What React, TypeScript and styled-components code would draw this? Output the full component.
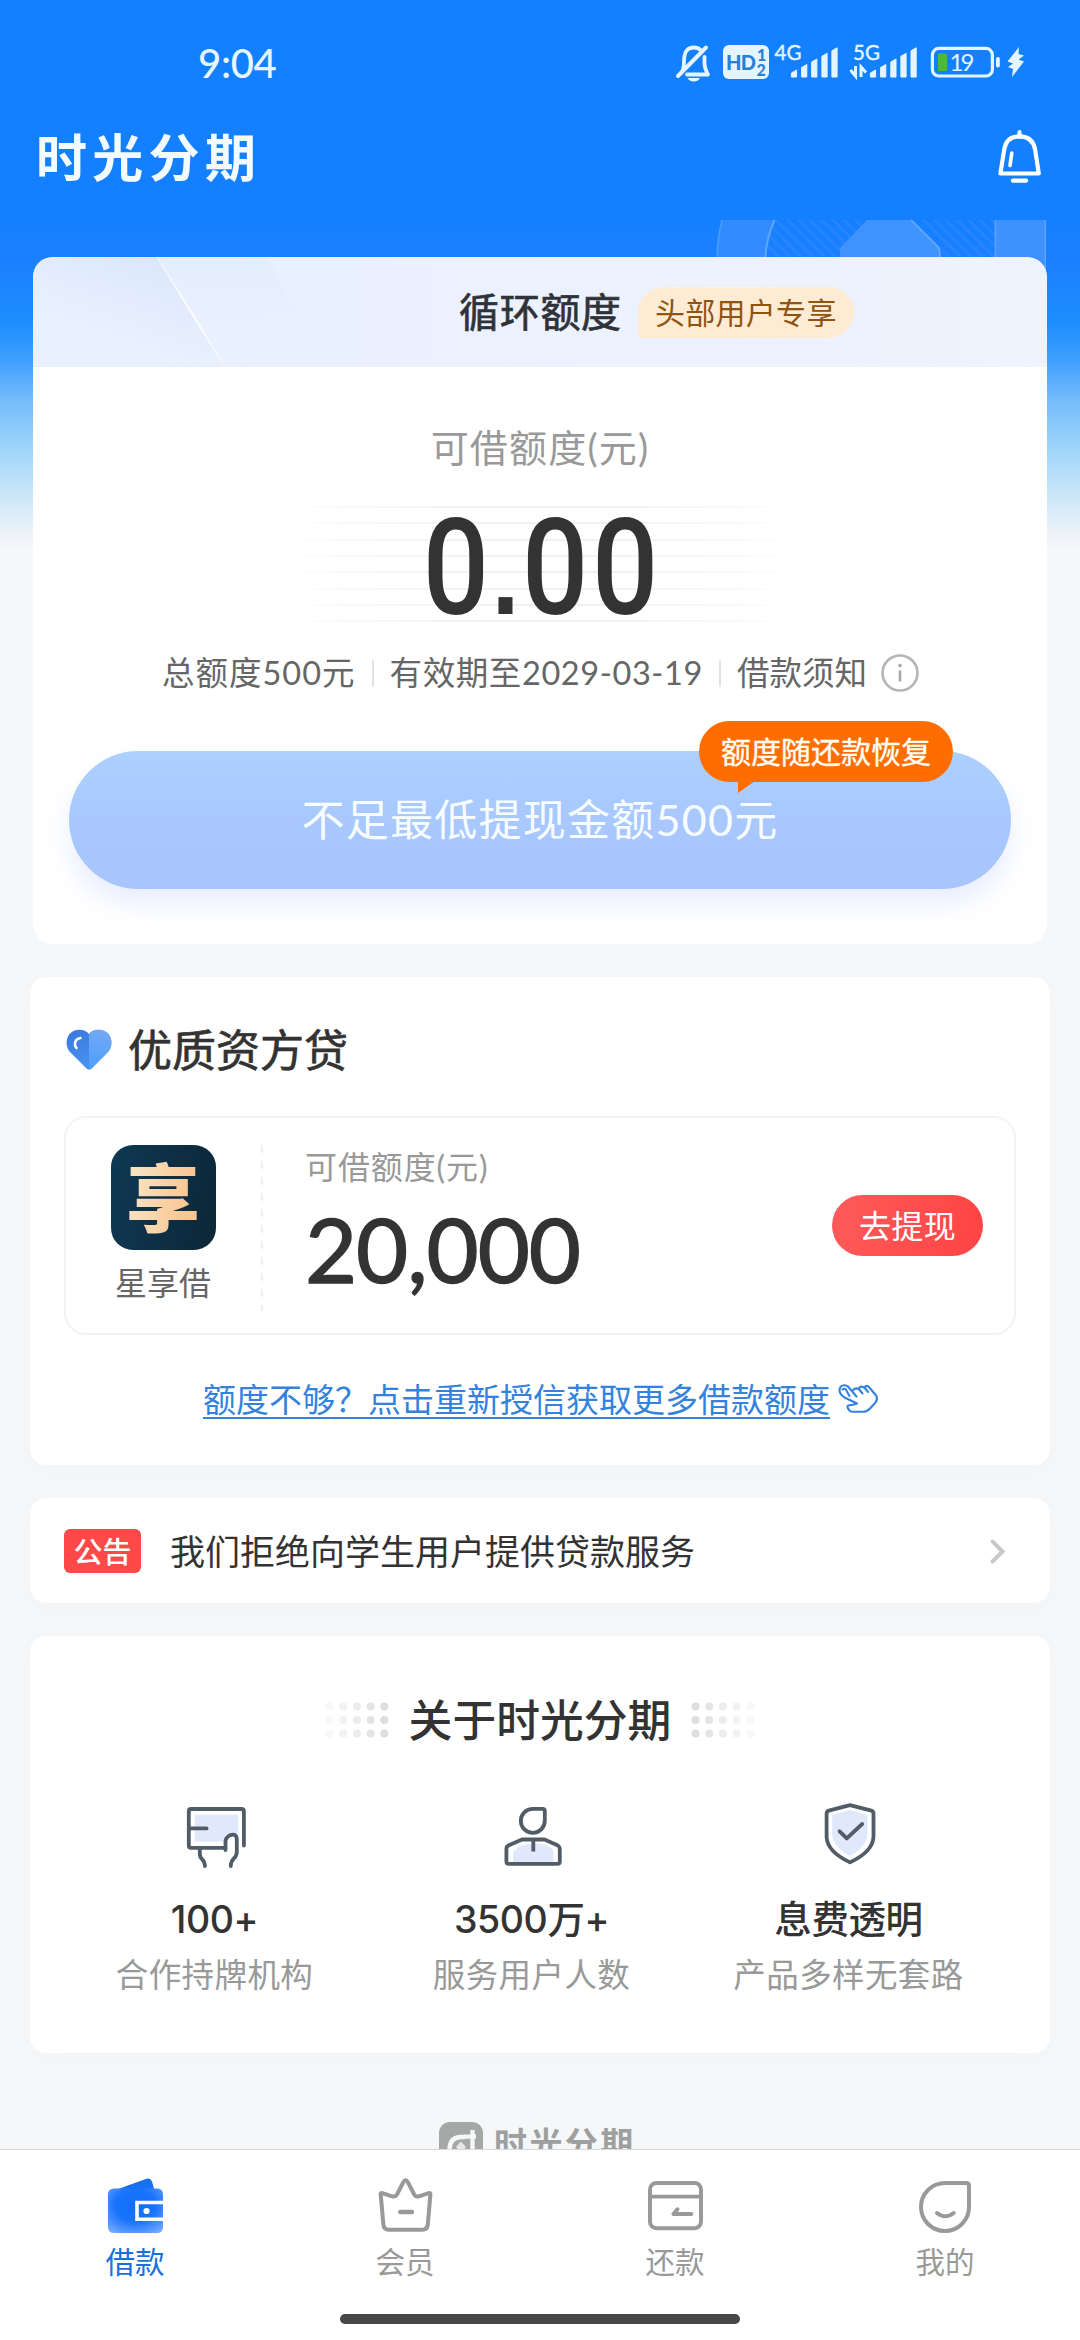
import React from "react";
import styled, { createGlobalStyle } from "styled-components";

const GlobalStyle = createGlobalStyle`
  *, *::before, *::after { box-sizing: border-box; }
  html, body { margin: 0; padding: 0; background: #f6f7f9; }
  body {
    font-family: "Lato", "Noto Sans CJK SC", sans-serif;
    color: #333;
    -webkit-font-smoothing: antialiased;
  }
`;

/* ---------- shared ---------- */

type GlyphProps = { box: [number, number, number, number]; children: React.ReactNode };

const GlyphSvg = styled.svg`
  display: block;
  flex: none;
  overflow: visible;
`;

function Glyph({ box, children }: GlyphProps) {
  return (
    <GlyphSvg width={box[2]} height={box[3]} viewBox={box.join(" ")} fill="none" aria-hidden="true">
      {children}
    </GlyphSvg>
  );
}

type LineProps = {
  $size: number;
  $line: number;
  $color?: string;
  $weight?: number;
  $spacing?: number;
  $stroke?: number;
};

const Line = styled.span<LineProps>`
  display: block;
  white-space: nowrap;
  font-size: ${(p) => p.$size}px;
  line-height: ${(p) => p.$line}px;
  color: ${(p) => p.$color ?? "#333"};
  font-weight: ${(p) => p.$weight ?? 400};
  letter-spacing: ${(p) => p.$spacing ?? 0}px;
  -webkit-text-stroke: ${(p) => p.$stroke ?? 0}px currentColor;
`;

const Screen = styled.div`
  position: relative;
  width: 1080px;
  height: 2340px;
  overflow: hidden;
  display: flex;
  flex-direction: column;
  background: linear-gradient(
    180deg,
    #1380ff 0,
    #1480ff 215px,
    #1b80ff 260px,
    #1e8dff 322px,
    #3f9fff 360px,
    #74bcfc 400px,
    #a0d5fa 450px,
    #cfe8f8 500px,
    #e8f1f8 528px,
    #f6f7f9 550px
  );
`;

/* ---------- status bar ---------- */

const StatusBar = styled.div`
  display: flex;
  align-items: flex-start;
  justify-content: space-between;
  height: 116px;
  padding: 42px 55px 0 198px;
`;

const Clock = styled.span`
  font-size: 40px;
  line-height: 42px;
  color: #e6f7ff;
  letter-spacing: -0.3px;
  font-weight: 500;
`;

const StatusIcons = styled.div`
  display: flex;
  gap: 6px;
`;

const ICE = "#e4f5ff";

function SignalBars({ xs }: { xs: number[] }) {
  const tops = [70, 64.5, 59, 53.3, 47.8];
  return (
    <>
      {xs.map((x, i) => (
        <path
          key={x}
          d={`M${x - 2.6} ${tops[i] + 3} L${x + 2.6} ${tops[i]} V77 H${x - 2.6} Z`}
          fill={ICE}
          stroke={ICE}
          strokeWidth="1"
          strokeLinejoin="round"
        />
      ))}
    </>
  );
}

function SystemIcons() {
  return (
    <StatusIcons>
      <Glyph box={[676, 42, 41, 40]}>
        <path
          d="M681.5 72.5 C684 69 684 66 684 62 C684 52 687 47.5 694 47.5 C697 47.5 699 48.5 700.5 50 M704.5 57 V63 C704.5 68 705.5 70 708 74.5 H687"
          stroke={ICE}
          strokeWidth="3.8"
          strokeLinecap="round"
          strokeLinejoin="round"
        />
        <path d="M678 76 L706 47.5" stroke={ICE} strokeWidth="4" strokeLinecap="round" />
        <path d="M687.5 78 H700 Q698 81.6 693.7 81.6 Q689.5 81.6 687.5 78Z" fill={ICE} />
      </Glyph>
      <Glyph box={[723, 42, 46, 40]}>
        <rect x="723" y="45" width="46" height="34" rx="6" fill={ICE} />
        <text x="726" y="69.5" fontFamily="Lato" fontWeight="900" fontSize="20" fill="#2a7fd6" textLength="30">
          HD
        </text>
        <text x="757" y="61" fontFamily="Lato" fontWeight="900" fontSize="16" fill="#2a7fd6">
          1
        </text>
        <text x="756.5" y="75.5" fontFamily="Lato" fontWeight="900" fontSize="16" fill="#2a7fd6">
          2
        </text>
      </Glyph>
      <Glyph box={[775, 42, 69, 40]}>
        <text x="774.5" y="60" fontFamily="Lato" fontSize="20.5" fill={ICE} stroke={ICE} strokeWidth="0.4">
          4G
        </text>
        <SignalBars xs={[794, 804.2, 814.3, 824.5, 834.5]} />
      </Glyph>
      <Glyph box={[850, 42, 75, 40]}>
        <text x="853" y="60" fontFamily="Lato" fontSize="20.5" fill={ICE} stroke={ICE} strokeWidth="0.4">
          5G
        </text>
        <path d="M850.5 70 L855.5 76 V66 M861 77 V67 L866 72.5" stroke={ICE} strokeWidth="3" />
        <SignalBars xs={[873, 883.2, 893.4, 903.5, 913.6]} />
      </Glyph>
      <Glyph box={[931, 42, 70, 40]}>
        <rect x="932.4" y="48.4" width="60" height="27.6" rx="6.5" stroke={ICE} strokeWidth="3.2" />
        <rect x="938" y="53.5" width="9" height="17.5" rx="1.5" fill="#4fb83e" />
        <rect x="996" y="57" width="3.8" height="10.5" rx="1.8" fill={ICE} />
        <text x="949.5" y="71" fontFamily="Lato" fontSize="24" fill={ICE} textLength="25">
          19
        </text>
      </Glyph>
      <Glyph box={[1007, 42, 18, 40]}>
        <path d="M1019 47 L1007.5 61.5 L1013 63.5 L1008 67 L1013 69 L1012 77 L1024 61.5 L1018.5 59.5 L1024 55.5 L1018.5 54 Z" fill={ICE} />
      </Glyph>
    </StatusIcons>
  );
}

/* ---------- brand bar ---------- */

const BrandBar = styled.header`
  display: flex;
  align-items: flex-start;
  justify-content: space-between;
  height: 141px;
  padding: 12px 37px 0 36px;
`;

const Brand = styled.h1`
  margin: 0;
  font-size: 51px;
  line-height: 59px;
  font-weight: 700;
  letter-spacing: 5.3px;
  color: #f2fbff;
`;

const HeroArt = styled.div`
  position: absolute;
  top: 220px;
  left: 714px;
`;

/* ---------- quota card ---------- */

const QuotaCard = styled.section`
  position: relative;
  display: flex;
  flex-direction: column;
  height: 687px;
  margin: 0 33px;
  border-radius: 20px;
  background: #fff;
`;

const QuotaHead = styled.div`
  display: flex;
  align-items: center;
  height: 110px;
  padding-left: 426px;
  border-radius: 22px 22px 0 0;
  background: linear-gradient(90deg, #e9f1fe, #ebf1fe 40%, #eef3fd);
  position: relative;
`;

const HeadShine = styled.div`
  position: absolute;
  left: 0;
  top: 0;
`;

const UserTag = styled.span`
  margin: 1px 0 0 16px;
  height: 51px;
  width: 216px;
  border-radius: 26px 26px 26px 3px;
  background: #fdebd3;
  text-align: center;
`;

const Centered = styled.div<{ $top: number }>`
  display: flex;
  justify-content: center;
  margin-top: ${(p) => p.$top}px;
`;

const AmountStage = styled.div`
  display: flex;
  justify-content: center;
  height: 117px;
  width: 540px;
  margin: 34px auto 0;
  position: relative;

  &::before {
    content: "";
    position: absolute;
    inset: 0;
    background: repeating-linear-gradient(180deg, #f1f1f1 0 2px, transparent 2px 16.35px);
    mask-image: linear-gradient(90deg, transparent, #000 40%, #000 60%, transparent);
  }
`;

const Amount = styled.span`
  position: relative;
  display: flex;
  align-items: baseline;
  padding-top: 4px;
  font-family: "Roboto", sans-serif;
  font-weight: 500;
  font-size: 134px;
  line-height: 117px;
  transform: scaleX(0.87);
  color: #333;
`;

const Digit = styled.span`
  display: block;
  width: 80.5px;
  text-align: center;
`;

const Point = styled.span`
  display: block;
  width: 33.5px;
  font-family: "Liberation Sans", sans-serif;
  font-weight: 700;
  font-size: 114px;
  line-height: 100px;
  text-align: center;
`;

const Facts = styled.div`
  display: flex;
  align-items: center;
  height: 44px;
  margin: 28px 0 0 129px;
`;

const Rule = styled.i`
  width: 2px;
  height: 27px;
  margin: 0 16px;
  background: #e2e2e2;
`;

const InfoSlot = styled.div`
  margin-left: 13px;
`;

const WithdrawButton = styled.button`
  position: relative;
  display: flex;
  align-items: center;
  justify-content: center;
  height: 138px;
  width: 942px;
  margin: 56px 0 0 36px;
  padding: 0;
  border: 0;
  border-radius: 69px;
  font-family: inherit;
  background: linear-gradient(180deg, #acd0ff 0%, #a8c8ff 50%, #a8c4fd 100%);
  box-shadow: 0 14px 26px rgba(160, 180, 250, 0.24);
`;

const Bubble = styled.span`
  position: absolute;
  top: -30px;
  left: 630px;
  width: 254px;
  height: 61px;
  border-radius: 31px;
  background: #ff6c00;
  text-align: center;

  &::after {
    content: "";
    position: absolute;
    left: 39px;
    top: 60px;
    border-style: solid;
    border-width: 12px 17px 0 0;
    border-color: #ff6c00 transparent transparent transparent;
  }
`;

/* ---------- generic cards ---------- */

const Card = styled.section<{ $h: number; $top: number }>`
  display: flex;
  flex-direction: column;
  flex: none;
  height: ${(p) => p.$h}px;
  margin: ${(p) => p.$top}px 30px 0;
  border-radius: 16px;
  background: #fff;
  box-shadow: 0 6px 24px rgba(60, 70, 90, 0.025);
`;

const SectionTitle = styled.div`
  display: flex;
  align-items: center;
  height: 66px;
  margin: 40px 0 0 36px;
  gap: 16px;
`;

const LenderBox = styled.div`
  display: flex;
  width: 952px;
  height: 219px;
  margin: 33px 0 0 34px;
  border: 2px solid #f3f3f4;
  border-radius: 22px;
`;

const LenderBrand = styled.div`
  display: flex;
  flex-direction: column;
  align-items: center;
  width: 197px;
  height: 166px;
  margin-top: 27px;
  padding-right: 3px;
  background: repeating-linear-gradient(180deg, #efefef 0 8px, transparent 8px 16px) right top / 2px 100% no-repeat;
`;

const LenderLogo = styled.div`
  display: flex;
  flex: none;
  align-items: center;
  justify-content: center;
  width: 105px;
  height: 105px;
  margin-bottom: 10px;
  border-radius: 22px;
  background: linear-gradient(100deg, #0f3854, #0c2737);
`;

const LenderMark = styled.span`
  font-size: 74px;
  line-height: 100px;
  font-weight: 900;
  background: linear-gradient(100deg, #f7e2c0 15%, #fbc592 80%);
  background-clip: text;
  -webkit-background-clip: text;
  color: transparent;
`;

const LenderQuota = styled.div`
  display: flex;
  flex-direction: column;
  flex: 1;
  margin: 29px 0 0 42px;
`;

const GoButton = styled.button`
  width: 151px;
  height: 61px;
  margin: 77px 31px 0 0;
  padding: 0;
  border: 0;
  border-radius: 31px;
  font-family: inherit;
  background: linear-gradient(100deg, #ff5a5a, #ff4444);
`;

const MoreLink = styled.a`
  display: flex;
  align-items: center;
  margin: 41px 0 0 173px;
  gap: 7px;
`;

const LinkText = styled(Line)`
  text-decoration: underline;
  text-decoration-thickness: 2px;
  text-underline-offset: 5px;
`;

const NoticeCard = styled(Card)`
  flex-direction: row;
  align-items: center;
  padding: 0 44px 0 34px;
`;

const NoticeTag = styled.span`
  width: 77px;
  height: 44px;
  margin-right: 29px;
  border-radius: 6px;
  background: #ff4848;
  text-align: center;
`;

const Spacer = styled.div`
  flex: 1;
`;

const AboutTitle = styled.div`
  display: flex;
  align-items: center;
  justify-content: center;
  gap: 20px;
  height: 66px;
  margin-top: 51px;
`;

const Stats = styled.div`
  display: grid;
  grid-template-columns: repeat(3, 317px);
  margin: 48px 0 0 26px;
`;

const Stat = styled.div`
  display: flex;
  flex-direction: column;
  align-items: center;
`;

const StatIcon = styled.div`
  height: 88px;
  padding: 3px 0 0 2px;
`;

const StatValue = styled.span`
  display: block;
  white-space: nowrap;
  font-family: "Inter", "Noto Sans CJK SC", sans-serif;
  font-size: 37.5px;
  line-height: 61px;
  font-weight: 500;
  letter-spacing: -0.4px;
  color: #333;
`;

/* ---------- bottom ---------- */

const FooterBrand = styled.div`
  display: flex;
  flex: none;
  gap: 11px;
  height: 27px;
  margin: 69px 0 0 439px;
  overflow: hidden;
`;

const FooterName = styled(Line)`
  margin-top: -1px;
`;

const TabBar = styled.nav`
  display: grid;
  grid-template-columns: repeat(4, 270px);
  flex: none;
  position: relative;
  height: 191px;
  padding-top: 28px;
  border-top: 1px solid #d9dadb;
  background: #fff;
`;

const Tab = styled.div`
  display: flex;
  flex-direction: column;
  align-items: center;
`;

const HomeBar = styled.div`
  position: absolute;
  left: 340px;
  bottom: 16px;
  width: 400px;
  height: 10px;
  border-radius: 5px;
  background: #474747;
`;

const SLATE = "#515c66";
const GREY = "#999";

function Dots({ flip }: { flip?: boolean }) {
  const shades = ["#f7f7f7", "#f2f2f2", "#ececec", "#e4e4e4", "#dedede"];
  if (flip) shades.reverse();
  return (
    <Glyph box={[0, 0, 64, 36]}>
      {shades.map((c, i) =>
        [4.5, 18, 31.5].map((y) => <circle key={`${i}-${y}`} cx={4.5 + i * 13.7} cy={y} r="4" fill={c} />)
      )}
    </Glyph>
  );
}

const stats = [
  {
    value: "100+",
    label: "合作持牌机构",
    icon: (
      <Glyph box={[185, 1805, 62, 66]}>
        <rect x="194.6" y="1815.8" width="43.6" height="26.8" fill="#e0e8fc" />
        <path
          d="M243.9 1846.5 V1812.5 Q243.9 1810 241.4 1810 H191.2 Q188.8 1810 188.8 1812.4 V1846.4 Q188.8 1848.8 191.2 1848.8 H225 M188.8 1829.4 H206.6 M199.8 1849 V1855 Q199.8 1858.4 202.4 1860.6 Q204.9 1863 204.9 1867"
          stroke={SLATE}
          strokeWidth="3.8"
          strokeLinecap="round"
        />
        <path
          d="M225.5 1851 V1843 Q225.5 1838.6 229.5 1836.6 Q236.8 1833.5 236.8 1841 V1853 Q236.8 1857 233.6 1859.8 Q230.8 1862.4 230.8 1867"
          fill="#fff"
          stroke={SLATE}
          strokeWidth="3.8"
          strokeLinecap="round"
        />
      </Glyph>
    ),
  },
  {
    value: "3500万+",
    label: "服务用户人数",
    icon: (
      <Glyph box={[501, 1805, 62, 66]}>
        <path d="M512 1863 V1853 Q518 1845 530 1844.5 H537 Q549 1845 552.5 1852 V1863 Z" fill="#e0e8fc" />
        <path
          d="M531.8 1809.8 H541.5 Q543.8 1809.8 543.8 1812 V1821.5 A12 12 0 1 1 531.8 1809.8 Z"
          stroke={SLATE}
          strokeWidth="3.8"
        />
        <path
          d="M521 1840.5 H543.5 L557 1846.5 Q558.8 1847.6 558.8 1850 V1862.5 Q558.8 1864.9 556.4 1864.9 H507.8 Q505.4 1864.9 505.4 1862.5 V1850 Q505.4 1847.6 507.4 1846.5 Z"
          stroke={SLATE}
          strokeWidth="3.8"
          strokeLinejoin="round"
        />
        <path d="M532.3 1842 V1852.5" stroke={SLATE} strokeWidth="3.8" />
      </Glyph>
    ),
  },
  {
    value: "息费透明",
    label: "产品多样无套路",
    icon: (
      <Glyph box={[819, 1805, 62, 64]}>
        <path d="M850 1811 L867.5 1816 V1836 Q866.5 1848 850 1857 Q833.5 1848 832.2 1836 V1816 Z" fill="#e0e8fc" />
        <path
          d="M850 1806.2 L871.3 1811.6 Q873.5 1812.4 873.5 1814.6 V1838 Q872.8 1852.5 850 1863.4 Q827.2 1852.5 826.6 1838 V1814.6 Q826.6 1812.4 828.8 1811.6 Z"
          stroke={SLATE}
          strokeWidth="3.8"
          strokeLinejoin="round"
        />
        <path
          d="M839.6 1832.3 L846.8 1839.4 L862.2 1825"
          stroke={SLATE}
          strokeWidth="3.8"
          strokeLinecap="round"
          strokeLinejoin="round"
        />
      </Glyph>
    ),
  },
];

const tabs = [
  {
    label: "借款",
    active: true,
    icon: (
      <Glyph box={[105, 2178, 59, 56]}>
        <defs>
          <radialGradient id="walletBody" cx="0.5" cy="0.38" r="0.75">
            <stop offset="0" stopColor="#0f6ffb" />
            <stop offset="0.5" stopColor="#1a74fb" />
            <stop offset="0.85" stopColor="#5a9bfd" />
            <stop offset="1" stopColor="#7bb0fd" />
          </radialGradient>
        </defs>
        <path d="M113 2190.5 L145.5 2178.8 Q149.5 2177.8 151 2181.5 L153.5 2190.5 Z" fill="#1670f0" />
        <rect x="107" y="2188.5" width="55" height="44.5" rx="5.5" fill="url(#walletBody)" />
        <path d="M162.5 2202.5 H136 V2219.3 H162.5" stroke="#fff" strokeWidth="3.6" />
        <circle cx="145.5" cy="2211" r="3.1" fill="#fff" />
      </Glyph>
    ),
  },
  {
    label: "会员",
    icon: (
      <Glyph box={[375, 2178, 59, 56]}>
        <path
          d="M379.7 2194.5 Q379.4 2192.4 381.4 2193.1 L391 2196.3 Q394.4 2197.2 396 2194.5 L402.2 2182.4 Q404.6 2178 407 2182.4 L413.2 2194.5 Q414.8 2197.2 418 2196.3 L427.6 2193.1 Q429.6 2192.4 429.4 2194.5 L426.8 2224.5 Q426.4 2229.7 421.4 2229.7 H387.8 Q382.8 2229.7 382.4 2224.5 Z"
          stroke={GREY}
          strokeWidth="4"
          strokeLinejoin="round"
        />
        <path d="M399.2 2212 H411" stroke={GREY} strokeWidth="4.4" strokeLinecap="round" />
      </Glyph>
    ),
  },
  {
    label: "还款",
    icon: (
      <Glyph box={[645, 2178, 59, 56]}>
        <rect x="649" y="2183" width="51" height="45.2" rx="6.5" stroke={GREY} strokeWidth="4" />
        <path d="M649 2196.7 H700" stroke={GREY} strokeWidth="3.8" />
        <path
          d="M690.3 2214 H672.5 L676.5 2209.3"
          stroke={GREY}
          strokeWidth="4"
          strokeLinecap="round"
          strokeLinejoin="round"
        />
      </Glyph>
    ),
  },
  {
    label: "我的",
    icon: (
      <Glyph box={[915, 2178, 59, 56]}>
        <path
          d="M944 2183 H965 Q968 2183 968 2186 V2207 A24 24 0 1 1 944 2183 Z"
          stroke={GREY}
          strokeWidth="4"
          strokeLinejoin="round"
        />
        <path d="M936 2213 Q944.3 2219.6 952.7 2213" stroke={GREY} strokeWidth="4" strokeLinecap="round" />
      </Glyph>
    ),
  },
];

export default function App() {
  return (
    <Screen>
      <GlobalStyle />
      <HeroArt>
        <Glyph box={[714, 220, 336, 60]}>
          <defs>
            <pattern id="hatch" width="8" height="8" patternUnits="userSpaceOnUse" patternTransform="rotate(-45)">
              <rect width="2.4" height="8" fill="#3b8dff" opacity="0.45" />
            </pattern>
          </defs>
          <path d="M775 220 H996 V257 H765 Q767 236 775 220Z" fill="url(#hatch)" />
          <path d="M722 220 H774 Q766 238 765 257 H717 Q717.5 238 722 220Z" fill="#328bff" />
          <path d="M722 220 Q717.5 238 717 257" stroke="#4d9dff" strokeWidth="1.4" />
          <path d="M774.5 220 Q766.5 238 765.3 257" stroke="#5ba6ff" strokeWidth="2" />
          <path d="M867 220 H911 L938 247 Q940 250 940 257 H840 V248Z" fill="#4093ff" />
          <path d="M911 220 L938 247 Q940 250 940 257" stroke="#66adff" strokeWidth="1.6" />
          <path d="M995 220 H1045.5 V272 H995Z" fill="#3f91ff" />
          <path d="M995.3 220 V257 M1045.3 220 V272" stroke="#5ba6ff" strokeWidth="1.4" />
        </Glyph>
      </HeroArt>

      <StatusBar>
        <Clock>9:04</Clock>
        <SystemIcons />
      </StatusBar>

      <BrandBar>
        <Brand>时光分期</Brand>
        <Glyph box={[996, 128, 47, 57]}>
          <path
            d="M1019.5 136.3 C1010 136.3 1005.6 142 1004.3 149 L1000.4 173.5 H1038.8 L1035 149 C1033.6 142 1029 136.3 1019.5 136.3Z"
            stroke="#fff"
            strokeWidth="4.2"
            strokeLinejoin="round"
          />
          <path d="M1019.5 132 V137" stroke="#fff" strokeWidth="4" strokeLinecap="round" />
          <path d="M1011.8 153 L1010 165.5" stroke="#fff" strokeWidth="3.6" strokeLinecap="round" />
          <path d="M1013 180.6 H1026" stroke="#fff" strokeWidth="4.4" strokeLinecap="round" />
        </Glyph>
      </BrandBar>

      <QuotaCard>
        <QuotaHead>
          <HeadShine>
            <Glyph box={[0, 0, 300, 110]}>
              <defs>
                <linearGradient id="shineA" x1="0" y1="1" x2="0.62" y2="0">
                  <stop offset="0.35" stopColor="#dbe7fb" stopOpacity="0" />
                  <stop offset="1" stopColor="#d8e5fb" stopOpacity="0.85" />
                </linearGradient>
                <linearGradient id="shineB" x1="0" y1="0" x2="0" y2="1">
                  <stop offset="0" stopColor="#e0ecfd" stopOpacity="0.75" />
                  <stop offset="0.7" stopColor="#e0ecfd" stopOpacity="0" />
                </linearGradient>
                <linearGradient id="shineLine" x1="0" y1="0" x2="0" y2="1">
                  <stop offset="0" stopColor="#fff" stopOpacity="0.3" />
                  <stop offset="0.5" stopColor="#fff" stopOpacity="0.9" />
                  <stop offset="1" stopColor="#fff" stopOpacity="0.2" />
                </linearGradient>
              </defs>
              <path d="M22 0 H124 L190 110 H0 V22 Q0 0 22 0Z" fill="url(#shineA)" />
              <path d="M124 0 H234 L292 110 H190Z" fill="url(#shineB)" />
              <path d="M124 0 L192 110" stroke="url(#shineLine)" strokeWidth="2" />
            </Glyph>
          </HeadShine>
          <Line $size={40} $line={56} $color="#2f3238" $spacing={0.7} $stroke={0.7}>循环额度</Line>
          <UserTag>
            <Line $size={30} $line={50} $color="#8f5312" $spacing={0.3}>头部用户专享</Line>
          </UserTag>
        </QuotaHead>
        <Centered $top={55}>
          <Line $size={38} $line={50} $color="#999" $spacing={1.2}>可借额度(元)</Line>
        </Centered>
        <AmountStage>
          <Amount>
            <Digit>0</Digit>
            <Point>.</Point>
            <Digit>0</Digit>
            <Digit>0</Digit>
          </Amount>
        </AmountStage>
        <Facts>
          <Line $size={32.5} $line={44} $color="#666" $spacing={1}>总额度500元</Line>
          <Rule />
          <Line $size={32.5} $line={44} $color="#666" $spacing={0.6}>有效期至2029-03-19</Line>
          <Rule />
          <Line $size={32.5} $line={44} $color="#666">借款须知</Line>
          <InfoSlot>
            <Glyph box={[0, 0, 40, 40]}>
              <circle cx="20" cy="20" r="17.5" stroke="#b5b5b5" strokeWidth="2.6" />
              <circle cx="20" cy="12.5" r="1.8" fill="#a8a8a8" />
              <path d="M20 17.5 V28.5" stroke="#a8a8a8" strokeWidth="2.6" />
            </Glyph>
          </InfoSlot>
        </Facts>
        <WithdrawButton>
          <Line $size={43} $line={60} $color="#f7fdff" $spacing={1.25}>不足最低提现金额500元</Line>
          <Bubble>
            <Line $size={30} $line={60} $color="#fffdf5" $stroke={0.4}>额度随还款恢复</Line>
          </Bubble>
        </WithdrawButton>
      </QuotaCard>

      <Card $h={488} $top={33}>
        <SectionTitle>
          <Glyph box={[66, 1028, 46, 44]}>
            <defs>
              <linearGradient id="heartL" x1="0" y1="0" x2="0.6" y2="1">
                <stop offset="0" stopColor="#3a78de" />
                <stop offset="1" stopColor="#4a93f2" />
              </linearGradient>
              <linearGradient id="heartR" x1="0.5" y1="0" x2="0.3" y2="1">
                <stop offset="0" stopColor="#74a8f6" />
                <stop offset="1" stopColor="#4ba0fb" />
              </linearGradient>
            </defs>
            <path
              d="M89 1034 C84 1028 74 1029 69.5 1034 C65.5 1039 65.5 1047 70 1052 L86.5 1068.5 Q89 1070.5 91.5 1068.5 L108 1052 C112.5 1047 112.5 1039 108.5 1034 C104 1029 94 1028 89 1034Z"
              fill="url(#heartL)"
            />
            <path
              d="M89 1034 V1069.8 Q90.3 1069.6 91.5 1068.5 L108 1052 C112.5 1047 112.5 1039 108.5 1034 C104 1029 94 1028 89 1034Z"
              fill="url(#heartR)"
            />
            <path d="M80.5 1038 Q74.5 1039 75 1045 Q75.3 1047 76.5 1048" stroke="#fff" strokeWidth="2.6" strokeLinecap="round" />
          </Glyph>
          <Line $size={44} $line={66} $stroke={0.7}>优质资方贷</Line>
        </SectionTitle>
        <LenderBox>
          <LenderBrand>
            <LenderLogo>
              <LenderMark>享</LenderMark>
            </LenderLogo>
            <Line $size={32} $line={46} $color="#666">星享借</Line>
          </LenderBrand>
          <LenderQuota>
            <Line $size={32} $line={40} $color="#999" $spacing={0.9}>可借额度(元)</Line>
            <Line $size={90} $line={122} $spacing={-1.1} $stroke={1.4}>20,000</Line>
          </LenderQuota>
          <GoButton>
            <Line $size={32} $line={59} $color="#fff" $spacing={0.4}>去提现</Line>
          </GoButton>
        </LenderBox>
        <MoreLink>
          <LinkText $size={33} $line={46} $color="#3482dd">额度不够？点击重新授信获取更多借款额度</LinkText>
          <Glyph box={[836, 1383, 44, 34]}>
            <path
              d="M848.5 1397 L845.5 1391.5 Q844 1388.5 841.5 1390.5 M843.5 1398.5 L840.5 1396 Q837 1392 839.5 1388 Q842.5 1384.8 847 1387.5 L855.5 1397.5 M843.5 1398.5 L856 1404.5 Q851 1406.5 848 1406.2 Q845.5 1407 847 1409.5 L849 1412 Q850 1412.8 852 1412.8 H862 Q866 1412.8 869 1409.5 L874.5 1403.5 Q876.8 1400.5 875.5 1397 L867.5 1387.5 Q865.5 1386 863.5 1388.5 L867 1393 M863.5 1389 Q860 1386 857.5 1389.5 L861.5 1394.5 M857.5 1390 Q854 1388 851.5 1391.8"
              stroke="#3482dd"
              strokeWidth="2.1"
              strokeLinecap="round"
              strokeLinejoin="round"
            />
          </Glyph>
        </MoreLink>
      </Card>

      <NoticeCard $h={105} $top={33}>
        <NoticeTag>
          <Line $size={29} $line={45} $color="#fff" $weight={500}>公告</Line>
        </NoticeTag>
        <Line $size={35} $line={50}>我们拒绝向学生用户提供贷款服务</Line>
        <Spacer />
        <Glyph box={[988, 1537, 17, 28]}>
          <path d="M991.5 1541.5 L1001.5 1551.5 L991.5 1561.5" stroke="#c9c9c9" strokeWidth="4" strokeLinecap="round" />
        </Glyph>
      </NoticeCard>

      <Card $h={417} $top={33}>
        <AboutTitle>
          <Dots />
          <Line $size={43.8} $line={66} $weight={500}>关于时光分期</Line>
          <Dots flip />
        </AboutTitle>
        <Stats>
          {stats.map((s) => (
            <Stat key={s.label}>
              <StatIcon>{s.icon}</StatIcon>
              <StatValue>{s.value}</StatValue>
              <Line $size={32.5} $line={50} $color="#999" $spacing={0.4}>{s.label}</Line>
            </Stat>
          ))}
        </Stats>
      </Card>

      <FooterBrand>
        <Glyph box={[439, 2122, 44, 44]}>
          <rect x="439" y="2122" width="44" height="44" rx="11" fill="#a6a8a8" />
          <path d="M465 2137 H460 Q449.5 2138 449.5 2150" stroke="#f6f7f9" strokeWidth="4.4" />
          <path d="M464 2136.6 H476 M472.5 2130 V2152" stroke="#f6f7f9" strokeWidth="4.4" />
          <path d="M461 2141.5 L466 2147 L461 2153 L456 2147Z" fill="#e6e7e8" />
        </Glyph>
        <FooterName $size={33} $line={44} $weight={700} $color="#9ea0a0" $spacing={2.4}>时光分期</FooterName>
      </FooterBrand>

      <TabBar>
        {tabs.map((t) => (
          <Tab key={t.label}>
            {t.icon}
            <Line $size={29.5} $line={55} $color={t.active ? "#1b6fdc" : "#999"}>{t.label}</Line>
          </Tab>
        ))}
        <HomeBar />
      </TabBar>
    </Screen>
  );
}
